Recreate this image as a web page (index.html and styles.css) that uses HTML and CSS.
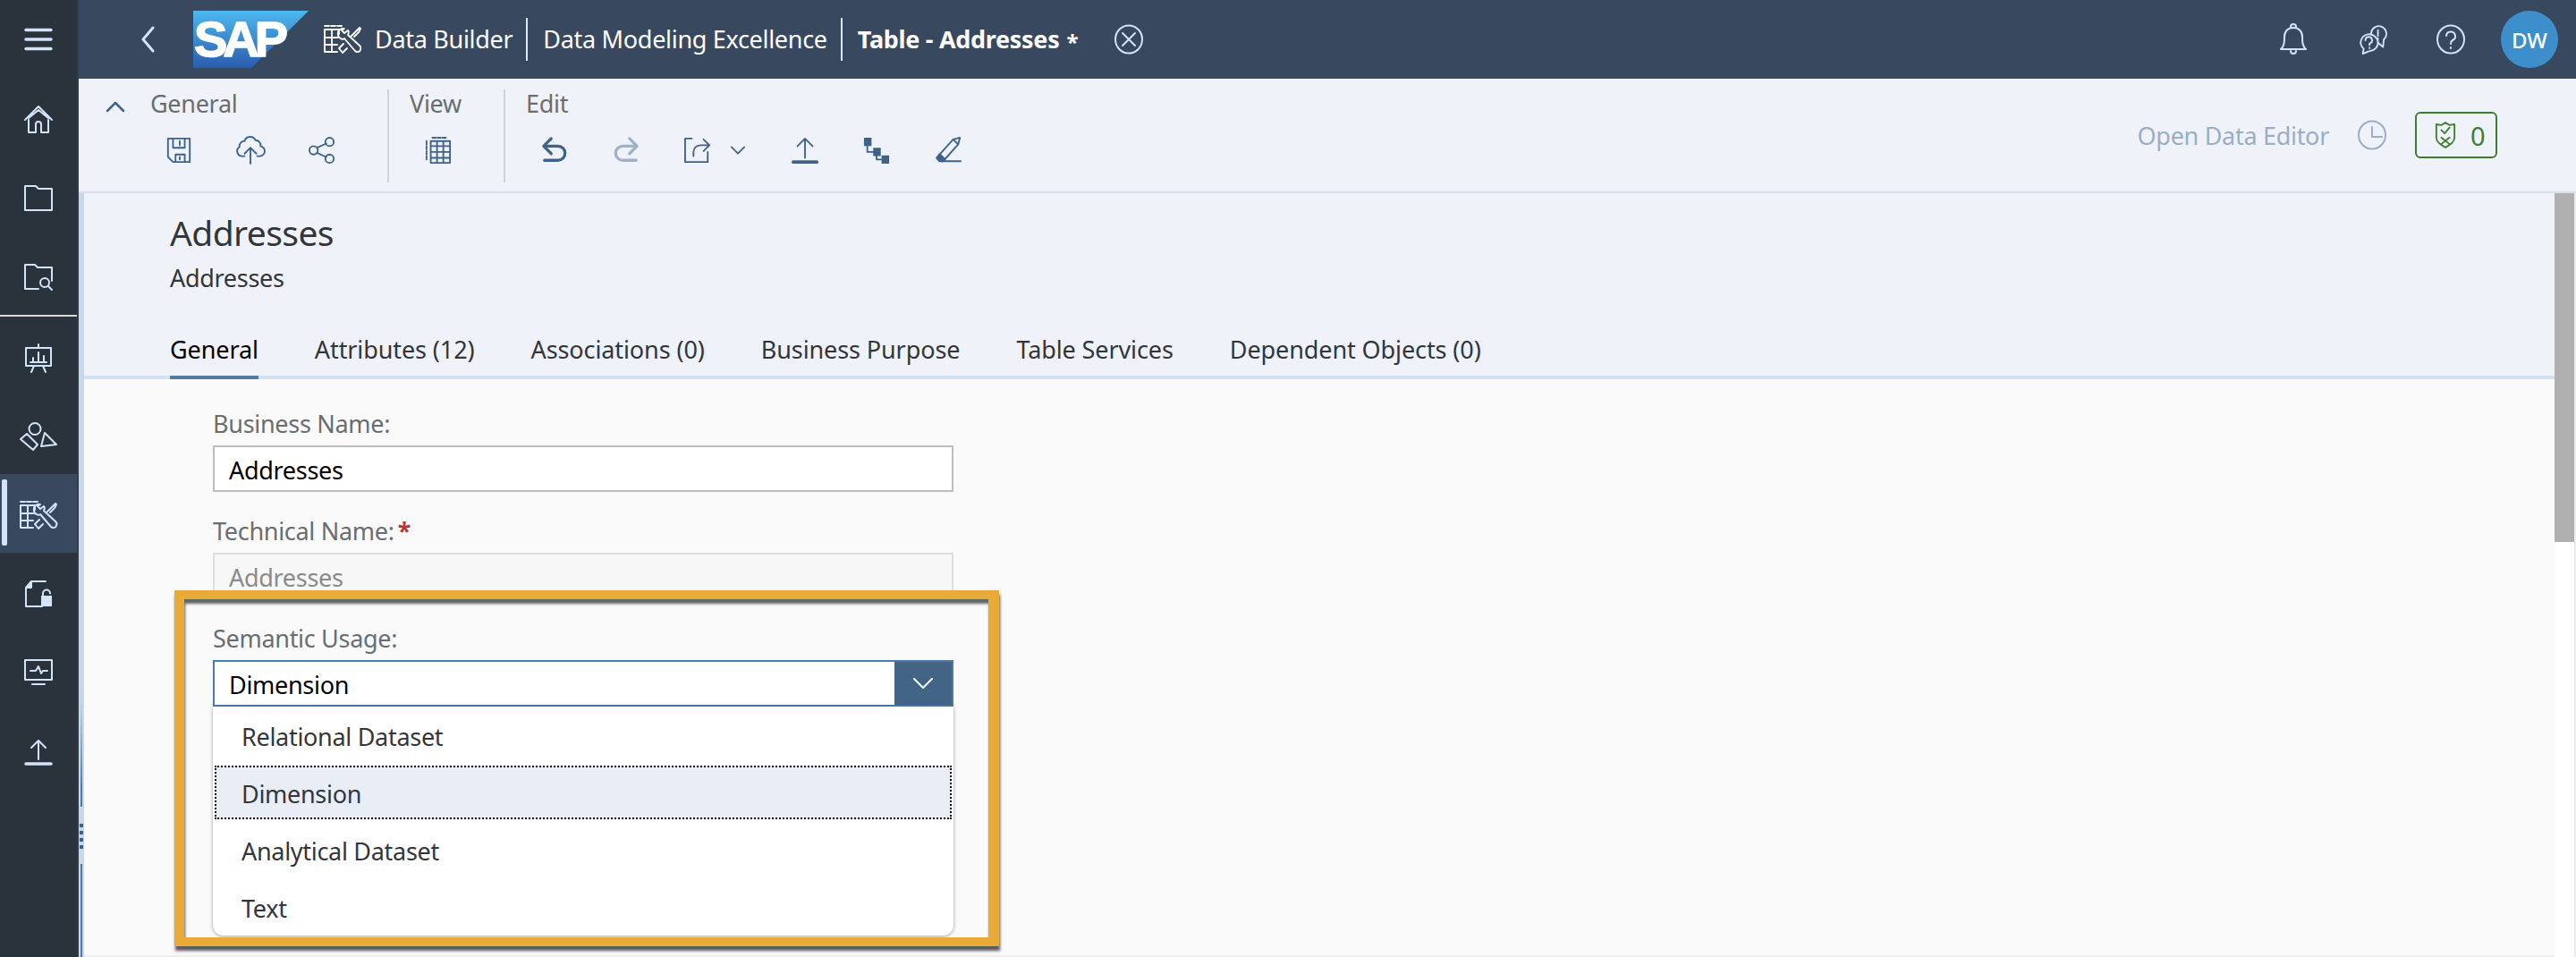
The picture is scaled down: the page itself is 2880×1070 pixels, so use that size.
FILE: index.html
```html
<!DOCTYPE html>
<html lang="en">
<head>
<meta charset="utf-8">
<title>Table - Addresses</title>
<link rel="stylesheet" href="styles.css">
</head>
<body>
<div class="app">
  <nav class="sidenav">
    <div class="nav-item"><svg class="nav-icon" viewBox="0 0 32 32"><path class="thick" d="M2 3.500h28M2 14h28M2 24.500h28"/></svg></div>
    <div class="nav-item"><svg class="nav-icon" viewBox="0 0 32 32"><path d="M1 16 16 1l15 15M5 14 16 5l11 9M5 16v14h8V21a3 3 0 0 1 6 0v9h8V16"/></svg></div>
    <div class="nav-item"><svg class="nav-icon" viewBox="0 0 32 32"><path d="M1 29V2h12l3 3h15v24z"/></svg></div>
    <div class="nav-item"><svg class="nav-icon" viewBox="0 0 32 32"><path d="M16 29H1V2h11l3 3h16v15"/><circle cx="23" cy="22" r="5"/><path d="m27 26 4 4"/></svg></div>
    <hr class="nav-divider">
    <div class="nav-item"><svg class="nav-icon" viewBox="0 0 32 32"><path d="M2 5h28v20H2zM16 1v4M11 25l-3 7M21 25l3 7M10 21v-5M16 21V10M22 21v-7M7 21h18"/></svg></div>
    <div class="nav-item"><svg class="nav-icon wide" viewBox="0 0 42 32"><circle cx="17" cy="7.500" r="6.500"/><path d="M1 19l7-6 12 12-5 6zM24 27l4-15 13 13z"/></svg></div>
    <div class="nav-item active"><svg class="nav-icon wide" viewBox="0 0 42 32"><path d="M1 1h5M8 1h5M15 1h5M1 5h16M1 5v25h14M1 14h15M1 22h14M9 5v25M17 5v5"/><path d="M23 4c-4-1-8 2-7 7 0 2 1 3 3 4 1 1 3 1 4 0l12 14c2 2 6 1 6-2 1-1 0-3-1-4L27 11c1-2 1-4 0-5l-4 3-3-3zM22 21l-5 5 4 5 5-5M31 12l6-6 3-3 1 1-2 4-5 5"/></svg></div>
    <div class="nav-item"><svg class="nav-icon" viewBox="0 0 32 32"><path d="M24 2H8L2 9v21h18M8 2v7H2"/><path class="fill" d="M8 3 3 9h5z"/><path class="fill" d="M19 18h12v12H19z"/><path d="M21 18v-2.500a4 4 0 0 1 8 0"/></svg></div>
    <div class="nav-item"><svg class="nav-icon" viewBox="0 0 32 32"><path d="M1 2h30v22H1zM9 29h14M7 14h6l3-5 3 8 2-3h5"/></svg></div>
    <div class="nav-item"><svg class="nav-icon" viewBox="0 0 32 32"><path d="M16 25V4M8 12l8-8 8 8"/><path class="thick" d="M2 30h28"/></svg></div>
  </nav>
  <div class="splitter"><span class="grip"></span></div>
  <div class="workspace">
    <header class="shell">
      <svg class="back" viewBox="0 0 18 32"><path d="M15 3 4 16l11 13"/></svg>
      <svg class="logo" viewBox="0 0 129 64" role="img" aria-label="SAP">
        <defs><linearGradient id="sapgrad" x1="0" y1="0" x2="0" y2="1"><stop offset="0" stop-color="#4db8ef"/><stop offset="1" stop-color="#2a5cae"/></linearGradient></defs>
        <path d="M0 0h129L65 64H0z" fill="url(#sapgrad)"/>
        <text class="logo-text" x="1" y="51">SAP</text>
      </svg>
      <svg class="shell-app" viewBox="0 0 42 32"><path d="M1 1h5M8 1h5M15 1h5M1 5h16M1 5v25h14M1 14h15M1 22h14M9 5v25M17 5v5"/><path d="M23 4c-4-1-8 2-7 7 0 2 1 3 3 4 1 1 3 1 4 0l12 14c2 2 6 1 6-2 1-1 0-3-1-4L27 11c1-2 1-4 0-5l-4 3-3-3zM22 21l-5 5 4 5 5-5M31 12l6-6 3-3 1 1-2 4-5 5"/></svg>
      <span class="crumb first">Data Builder</span>
      <span class="crumb-sep"></span>
      <span class="crumb">Data Modeling Excellence</span>
      <span class="crumb-sep"></span>
      <span class="crumb current">Table - Addresses</span><span class="dirty">*</span>
      <svg class="shell-close" viewBox="0 0 32 34"><ellipse cx="16" cy="17" rx="15" ry="15.500"/><path d="m9 10 14 14M23 10 9 24"/></svg>
      <div class="shell-right">
        <span class="shell-btn"><svg class="shell-icon" viewBox="0 0 32 34"><path d="M2 28c4-4 4-8 4-14 0-6 4-10 10-10s10 4 10 10c0 6 0 10 4 14zM13 3a3 3 0 0 1 6 0M13 30a3 3 0 0 0 6 0"/></svg></span>
        <span class="shell-btn"><svg class="shell-icon" viewBox="0 0 34 34"><path d="M16 11a9 9 0 1 1 15 6l-1 9-6-5"/><path d="M24 6v7M24 16v1"/><path d="M12 11a11 10 0 1 1 2 20l-8 3 1-6A11 10 0 0 1 12 11z"/><path d="M9 18a4 4 0 1 1 5 4v2M14 27v.5"/></svg></span>
        <span class="shell-btn"><svg class="shell-icon" viewBox="0 0 32 34"><ellipse cx="16" cy="17" rx="15" ry="15.500"/><path d="M11 13a5 5 0 1 1 7 5c-2 1-2 2-2 4M16 26v1"/></svg></span>
        <span class="avatar">DW</span>
      </div>
    </header>

    <section class="toolbar">
      <div class="collapse"><svg class="tb-chevron" viewBox="0 0 22 14"><path d="M2 12 11 3l9 9"/></svg></div>
      <div class="tb-group general">
        <div class="tb-label">General</div>
        <div class="tb-row">
          <span class="tb-slot"><svg class="tool" viewBox="0 0 32 32"><path d="M3 2h26v28H9l-6-6zM9 2v11h14V2M17 5v5M12 30v-9h11v9M17 24v3"/></svg></span>
          <span class="tb-slot"><svg class="tool" viewBox="0 0 32 32"><path d="M9 23H7a6 6 0 0 1-4-11 6 6 0 0 1 6-7 7 7 0 0 1 13-1 6 6 0 0 1 6 7 6 6 0 0 1-2 12h-2M16 32V13M9 20l7-7 7 7"/></svg></span>
          <span class="tb-slot"><svg class="tool" viewBox="0 0 32 32"><circle cx="6" cy="16" r="5"/><circle cx="25" cy="6" r="5"/><circle cx="25" cy="26" r="5"/><path d="m10 13 11-5M10 19l11 5"/></svg></span>
        </div>
      </div>
      <div class="tb-group">
        <div class="tb-label">View</div>
        <div class="tb-row">
          <span class="tb-slot"><svg class="tool" viewBox="0 0 32 32"><path d="M9 1h4M15 1h4M21 1h4M2 5v4M2 11v4M2 17v4M2 23v4M7 5h23v26H7zM7 11h23M7 18h23M7 25h23M14.500 5v26M22 5v26"/></svg></span>
        </div>
      </div>
      <div class="tb-group last">
        <div class="tb-label">Edit</div>
        <div class="tb-row">
          <span class="tb-slot"><svg class="tool bold" viewBox="0 0 32 32"><path d="M12 2 3 11l9 9M3 11h17a8 8 0 0 1 0 17H4"/></svg></span>
          <span class="tb-slot"><svg class="tool bold off" viewBox="0 0 32 32"><path d="m20 2 9 9-9 9M29 11H12a8 8 0 0 0 0 17h16"/></svg></span>
          <span class="tb-slot wide"><svg class="tool" viewBox="0 0 32 32"><path d="M9 2H1v28h27V18"/><path d="M11 23v-5c0-5 4-8 9-8h10M23 3l7 7-7 7"/></svg><svg class="tb-menu" viewBox="0 0 20 12"><path d="m2 2 8 8 8-8"/></svg></span>
          <span class="tb-slot"><svg class="tool" viewBox="0 0 32 32"><path d="M16 25V2M7 11l9-9 9 9"/><path class="base" d="M2 30h28"/></svg></span>
          <span class="tb-slot"><svg class="tool" viewBox="0 0 32 32"><path class="solid" d="M1 1h9v10H1zM12 13h9v10h-9zM22 22h9v10h-9z"/><path d="M5 11v7h7M16 23v4h6"/></svg></span>
          <span class="tb-slot"><svg class="tool" viewBox="0 0 32 32"><path d="m4 23 18-20 8-2-2 8-17 19zM22 3l6 6M8 29h23"/><path class="solid" d="m1 25 5-6 7 7-3 4H5z"/></svg></span>
        </div>
      </div>
      <div class="tb-right">
        <span class="open-editor">Open Data Editor</span>
        <svg class="clock" viewBox="0 0 32 34"><ellipse cx="16" cy="17" rx="15" ry="15.500"/><path d="M16 8v11h11"/></svg>
        <span class="status"><svg class="shield" viewBox="0 0 26 34"><path d="M13 2 8 5 2 4v16c0 6 6 9 11 12 5-3 11-6 11-12V4l-6 1z"/><path d="m8 11 4 4 6-7M8 20l10 8M18 20 8 28"/></svg><span>0</span></span>
      </div>
    </section>

    <div class="body-row">
      <main class="page">
        <div class="object-head">
          <h1 class="title">Addresses</h1>
          <div class="subtitle">Addresses</div>
          <div class="tabs">
            <span class="tab selected">General</span>
            <span class="tab">Attributes (12)</span>
            <span class="tab">Associations (0)</span>
            <span class="tab">Business Purpose</span>
            <span class="tab">Table Services</span>
            <span class="tab">Dependent Objects (0)</span>
          </div>
        </div>
        <div class="form">
          <label class="field-label">Business Name:</label>
          <div class="input">Addresses</div>
          <label class="field-label">Technical Name:<span class="req">*</span></label>
          <div class="input disabled">Addresses</div>
          <div class="semantic">
            <label class="field-label">Semantic Usage:</label>
            <div class="combo">
              <span class="combo-value">Dimension</span>
              <span class="combo-btn"><svg viewBox="0 0 24 14"><path d="m2 2 10 10L22 2"/></svg></span>
            </div>
            <ul class="popup">
              <li>Relational Dataset</li>
              <li class="focused">Dimension</li>
              <li>Analytical Dataset</li>
              <li>Text</li>
            </ul>
            <div class="highlight"></div>
          </div>
        </div>
      </main>
      <div class="scrollbar"><div class="thumb"></div></div>
    </div>
  </div>
</div>
</body>
</html>
```

FILE: styles.css
```css
* { box-sizing: border-box; }
html, body { margin: 0; height: 100%; overflow: hidden; }
body { font-family: "Noto Sans", "Liberation Sans", sans-serif; font-size: 27px; letter-spacing: -0.3px; color: #32363a; background: #fafafa; }
svg { display: block; fill: none; stroke: currentColor; stroke-width: 2; stroke-linecap: round; stroke-linejoin: round; }

.app { display: flex; height: 1070px; width: 2880px; }

/* side navigation */
.sidenav { width: 88px; flex: none; background: #2a323b; color: #d1e4fa; box-shadow: inset -2px 0 0 #333d48; }
.nav-item { height: 88px; padding-top: 3px; display: flex; align-items: center; justify-content: center; margin-right: 2px; position: relative; }
.nav-item.active { background: #38495f; }
.nav-item.active::before { content: ""; position: absolute; left: 2px; top: 6px; bottom: 8px; width: 6px; border-radius: 2px; background: #d1e4fa; }
.nav-icon { width: 32px; height: 32px; overflow: visible; }
.nav-icon .thick { stroke-width: 3.500; }
.nav-icon .fill { fill: currentColor; stroke: none; }
.nav-icon.wide { width: 42px; }
.nav-divider { height: 2px; margin: 0 2px 0 0; border: 0; background: #d8d8d8; }

.splitter { width: 6px; flex: none; background: #c9d8e8; margin-top: 216px; position: relative; }
.grip { position: absolute; left: 2px; top: 564px; width: 2px; height: 290px; background: linear-gradient(#c9d8e8 0, #4d7ba8 100px, #4d7ba8 122px, transparent 122px, transparent 186px, #4d7ba8 186px); }
.grip::after { content: ""; position: absolute; left: -1px; top: 141px; width: 4px; height: 28px; background: repeating-linear-gradient(#3f6289 0 4px, transparent 4px 8px); }

.workspace { margin-left: -6px; flex: 1; display: flex; flex-direction: column; min-width: 0; }

/* shell header */
.shell { height: 88px; flex: none; display: flex; align-items: center; padding-left: 68px; padding-right: 20px; background: #38495f; color: #fff; }
.back { width: 18px; height: 32px; color: #d1e4fa; stroke-width: 3; }
.logo { width: 129px; height: 64px; margin-left: 42px; stroke: none; }
.logo-text { font-family: "Liberation Sans", sans-serif; font-weight: 700; font-size: 56px; letter-spacing: -5px; fill: #fff; stroke: #fff; stroke-width: 1.500; }
.shell-app { width: 42px; height: 32px; margin-left: 17px; stroke-width: 1.800; }
.crumb { line-height: 36px; white-space: nowrap; }
.crumb.first { margin-left: 15px; }
.crumb.current { font-weight: 700; }
.crumb-sep { width: 2px; height: 48px; margin: 0 17px 0 15px; background: #dfe6ee; }
.dirty { margin-left: 8px; font-size: 24px; font-weight: 700; line-height: 36px; padding-top: 6px; }
.shell-close { width: 32px; height: 34px; margin-left: 41px; color: #d1e4fa; }
.shell-right { margin-left: auto; display: flex; align-items: center; color: #d1e4fa; }
.shell-btn { width: 88px; display: flex; justify-content: center; }
.shell-icon { width: 32px; height: 34px; overflow: visible; }
.avatar { width: 64px; height: 64px; margin-left: 12px; border-radius: 50%; background: #3c8fcb; color: #fff; display: flex; align-items: center; justify-content: center; font-size: 24px; font-weight: 500; letter-spacing: 0; }

/* toolbar */
.toolbar { height: 128px; flex: none; display: flex; background: #eff3f9; border-bottom: 2px solid #d3e0f0; color: #3f6289; }
.collapse { width: 72px; flex: none; padding: 24px 0 0 30px; }
.tb-chevron { width: 22px; height: 14px; stroke-width: 2.500; }
.tb-group { margin-top: 12px; height: 104px; width: 130px; padding-left: 15px; border-right: 2px solid #ced4da; }
.tb-group.general { width: 275px; padding-left: 0; }
.tb-group.last { width: auto; padding-right: 0; border-right: 0; }
.tb-label { padding-left: 8px; line-height: 32px; color: #6a6d70; }
.tb-row { display: flex; height: 72px; }
.tb-slot { width: 80px; display: flex; align-items: center; justify-content: center; }
.tb-slot.wide { width: 120px; padding-right: 0; gap: 21px; justify-content: flex-start; padding-left: 25px; }
.tool { width: 30px; height: 30px; overflow: visible; stroke-width: 2; }
.tool.bold { stroke-width: 3.500; }
.tool.off { color: #9fb1c7; }
.tool .base { stroke-width: 4; }
.tool .solid { fill: currentColor; stroke: none; }
.tb-menu { width: 18px; height: 12px; }
.tb-right { margin-left: auto; margin-right: 88px; display: flex; align-items: center; gap: 32px; }
.open-editor { color: #9aaec6; }
.clock { width: 32px; height: 34px; color: #9aaec6; }
.status { width: 92px; height: 52px; border: 2px solid #3e7d2f; border-radius: 6px; color: #3e7d2f; display: flex; align-items: center; padding-left: 20px; gap: 16px; font-size: 29px; }
.shield { width: 24px; height: 34px; }

/* body */
.body-row { flex: 1; display: flex; min-height: 0; }
.page { flex: 1; margin-left: 6px; background: #fafafa; border-bottom: 2px solid #eeeeee; min-width: 0; }
.object-head { height: 208px; padding: 20px 0 0 96px; background: #eff3f9; border-bottom: 4px solid #d3e0f0; }
.title { margin: 0; font-size: 39px; letter-spacing: -0.6px; font-weight: 400; line-height: 48px; color: #32363a; }
.subtitle { margin-top: 9px; line-height: 36px; }
.tabs { display: flex; gap: 63px; margin-top: 31px; height: 64px; letter-spacing: -0.1px; }
.tab { line-height: 62px; white-space: nowrap; height: 64px; }
.tab.selected { color: #000; border-bottom: 4px solid #4d7ba8; }

.form { padding: 30px 0 0 144px; width: 972px; }
.field-label { display: block; line-height: 40px; color: #6a6d70; margin-bottom: 4px; }
.req { color: #b03a3a; font-weight: 700; margin-left: 4px; }
.input { height: 52px; margin-bottom: 24px; padding-left: 16px; border: 2px solid #bdbdbd; background: #fff; color: #000; line-height: 52px; }
.input.disabled { background: #f7f7f7; border-color: #dedede; color: #8a8a8a; }

.semantic { position: relative; }
.combo { display: flex; height: 52px; border: 2px solid #4d7ba8; background: #fff; color: #000; }
.combo-value { flex: 1; padding-left: 16px; line-height: 52px; }
.combo-btn { width: 64px; background: #426485; color: #fff; display: flex; align-items: center; justify-content: center; }
.combo-btn svg { width: 24px; height: 14px; }
.popup { position: absolute; left: 0; right: 0; top: 96px; margin: 0; padding: 2px 0 0; list-style: none; height: 256px; background: #fff; border-radius: 0 0 12px 12px; box-shadow: 0 1px 4px rgba(0,0,0,.35); z-index: 1; }
.popup li { height: 60px; margin-bottom: 4px; line-height: 64px; padding-left: 32px; }
.popup li.focused { margin: 0 2px 4px; padding-left: 30px; background: #e9eef6; outline: 2px dotted #000; outline-offset: -2px; }
.highlight { position: absolute; left: -43px; right: -51px; top: -34px; height: 398px; border: solid #e8ab37; border-width: 10px 12px 10px 11px; box-shadow: 1px 5px 3px rgba(50,50,50,.8), inset 1px 5px 3px rgba(50,50,50,.75); z-index: 2; pointer-events: none; }

.scrollbar { width: 24px; flex: none; background: #fff; border-right: 2px solid #ededed; }
.thumb { height: 390px; background: #b0b0b0; }
```
